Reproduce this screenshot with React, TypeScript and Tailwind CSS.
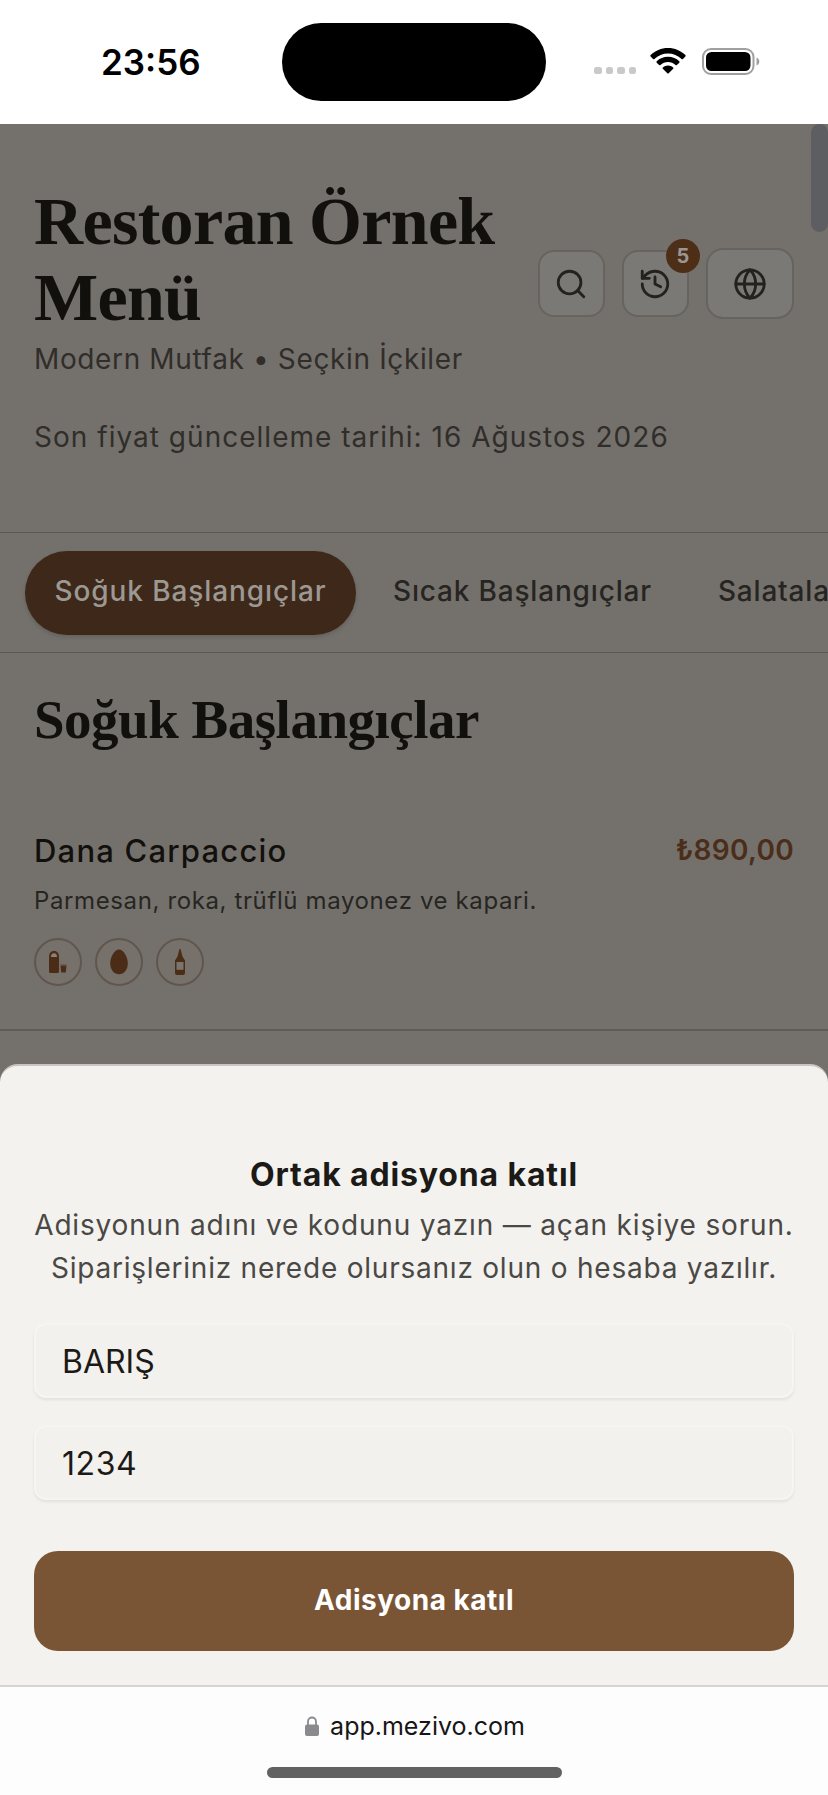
import { Search, History, Globe } from 'lucide-react';

function StatusBar() {
  return (
    <header className="flex h-[124px] shrink-0 items-start bg-white">
      <div className="ml-[101px] mt-[41px] w-[181px] text-[35px] font-semibold leading-[42px] text-black">23:56</div>
      <div className="mt-[23px] h-[78px] w-[264px] rounded-full bg-black" />
      <div className="ml-[48px] mt-[67px] flex gap-[4px]">
        {[0, 1, 2, 3].map((i) => (
          <span key={i} className="h-[7px] w-[7.5px] rounded-[2.5px] bg-[#c9c9c9]" />
        ))}
      </div>
      <svg className="ml-[14px] mt-[48px] h-[26px] w-[36px]" viewBox="0 0 36 26">
        <path d="M18 0C24.800 0 31 2.700 35.400 7.100C35.800 7.500 35.800 8.100 35.400 8.500L33 10.900C32.600 11.300 32 11.300 31.600 10.900C28 7.400 23.200 5.400 18 5.400S8 7.400 4.400 10.900C4 11.300 3.400 11.300 3 10.900L.6 8.500C.2 8.100 .2 7.500 .6 7.100C5 2.700 11.200 0 18 0Z" />
        <path d="M18 8.800C22.400 8.800 26.400 10.500 29.300 13.300C29.700 13.700 29.700 14.300 29.300 14.700L26.900 17C26.500 17.400 25.900 17.400 25.500 17C23.500 15.200 20.900 14.100 18 14.100S12.500 15.200 10.500 17C10.100 17.400 9.500 17.400 9.100 17L6.700 14.700C6.300 14.300 6.300 13.700 6.700 13.300C9.600 10.500 13.600 8.800 18 8.800Z" />
        <path d="M18 17.400C20 17.400 21.900 18.200 23.200 19.400C23.600 19.800 23.600 20.300 23.200 20.700L18.700 25.300C18.300 25.700 17.700 25.700 17.300 25.300L12.800 20.700C12.400 20.300 12.400 19.800 12.800 19.400C14.100 18.200 16 17.400 18 17.400Z" />
      </svg>
      <svg className="ml-[16px] mt-[48px] h-[27px] w-[58px]" viewBox="0 0 58 27">
        <rect x="1" y="1" width="50.500" height="25" rx="8" fill="none" stroke="#a0a0a0" strokeWidth="2" />
        <rect x="4" y="4" width="44.500" height="19" rx="5.500" />
        <path d="M54.500 9.500C56.500 10.200 57.300 11.700 57.300 13.500S56.500 16.800 54.500 17.500Z" fill="#a0a0a0" />
      </svg>
    </header>
  );
}

const iconButton =
  'relative flex items-center justify-center border-2 border-[#67635e] bg-[#7b7975] text-[#24221f]';

function MenuHeader() {
  return (
    <div className="flex h-[408px] flex-col px-[34px] pt-[59px]">
      <div className="flex items-center justify-between">
        <div className="w-[480px] shrink-0">
          <h1 className="whitespace-nowrap font-['Liberation_Serif',serif] text-[68px] font-bold leading-[76px] tracking-[-0.7px] text-[#12100d]">
            Restoran Örnek
            <br />
            Menü
          </h1>
          <p className="mt-[4px] whitespace-nowrap text-[28px] leading-[40px] tracking-[0.63px] text-[#302d2a]">
            Modern Mutfak • Seçkin İçkiler
          </p>
        </div>
        <div className="mt-[5px] flex shrink-0 items-center gap-[17px]">
          <button className={`${iconButton} size-[67px] rounded-[16px] pr-[2px]`}>
            <Search size={34} strokeWidth={2} />
          </button>
          <button className={`${iconButton} size-[67px] rounded-[16px] pr-[2px]`}>
            <History size={34} strokeWidth={2} />
            <span className="absolute -right-[13px] -top-[13px] flex size-[34px] items-center justify-center rounded-full bg-[#4d2f18] text-[20px] font-bold text-[#9a9693]">
              5
            </span>
          </button>
          <button className={`${iconButton} h-[71px] w-[88px] rounded-[17px]`}>
            <Globe size={34} strokeWidth={2} />
          </button>
        </div>
      </div>
      <p className="mt-[38px] whitespace-nowrap text-[28px] leading-[40px] tracking-[1.02px] text-[#302d2a]">
        Son fiyat güncelleme tarihi: 16 Ağustos 2026
      </p>
    </div>
  );
}

function Tabs() {
  return (
    <nav className="flex h-[121px] items-center overflow-hidden whitespace-nowrap border-y border-[#5b5853] pl-[25px] text-[28px] font-medium tracking-[0.82px] text-[#272522]">
      <div className="flex h-[84px] w-[331px] shrink-0 items-center justify-center rounded-full bg-[#3e2819] pb-[3px] tracking-[0.9px] text-[#9c9893] shadow-[0_2px_4px_rgba(0,0,0,0.15)]">
        Soğuk Başlangıçlar
      </div>
      <span className="ml-[37px] pb-[3px]">Sıcak Başlangıçlar</span>
      <span className="ml-[66px] pb-[3px]">Salatalar</span>
    </nav>
  );
}

function BottleAndGlass() {
  return (
    <svg className="size-[26px]" viewBox="0 0 26 26" fill="#4b2c17">
      <path d="M4 9C4 4 5.500 2 9 2S14 4 14 9V22.500Q14 24 12.500 24H5.500Q4 24 4 22.500Z" />
      <path d="M6 8C6 5.500 7 4.200 9 4.200S12 5.500 12 8Z" fill="#8a8378" />
      <path d="M15.500 16.500H21.500L20.800 23.500H16.200Z" />
      <path d="M15.300 15.700H21.700" stroke="#655647" strokeWidth="1" />
    </svg>
  );
}

function Egg() {
  return (
    <svg className="size-[26px]" viewBox="0 0 26 26" fill="#4b2c17">
      <path d="M13 .5C17.500 .5 21.800 8 21.800 14.500C21.800 20.500 18 25.300 13 25.300S4.200 20.500 4.200 14.500C4.200 8 8.500 .5 13 .5Z" />
    </svg>
  );
}

function SauceBottle() {
  return (
    <svg className="size-[26px]" viewBox="0 0 26 26" fill="#4b2c17">
      <path d="M12.500 0H13.500L15.500 7.500L18 11.500V24Q18 26 16 26H10Q8 26 8 24V11.500L10.500 7.500Z" />
      <path d="M9.500 13H16.500V20.800H9.500Z" fill="#7c756d" />
    </svg>
  );
}

function MenuSection() {
  const badge = 'flex size-[48px] items-center justify-center rounded-full border-2 border-[#60564d] bg-[#77716c]';
  return (
    <section>
      <div className="px-[34px] pt-[34px]">
        <h2 className="whitespace-nowrap font-['Liberation_Serif',serif] text-[55px] font-bold leading-[66px] tracking-[-0.5px] text-[#12100d]">
          Soğuk Başlangıçlar
        </h2>
        <div className="mt-[78px] flex items-start justify-between">
          <h3 className="text-[31px] font-medium leading-[40px] tracking-[1.2px] text-[#12100d]">Dana Carpaccio</h3>
          <span className="text-[28px] font-semibold leading-[38px] tracking-[0.3px] text-[#4b2e1a]">₺890,00</span>
        </div>
        <p className="mt-[14px] text-[24px] leading-[32px] tracking-[0.62px] text-[#272522]">
          Parmesan, roka, trüflü mayonez ve kapari.
        </p>
        <div className="mt-[21px] flex gap-[13px]">
          <span className={badge}><BottleAndGlass /></span>
          <span className={badge}><Egg /></span>
          <span className={badge}><SauceBottle /></span>
        </div>
      </div>
      <div className="mt-[43px] h-[2px] bg-[#5f5c57]" />
    </section>
  );
}

function JoinSheet() {
  const field =
    'flex h-[75px] w-full items-center rounded-[12px] border-2 border-[#f7f5f3] bg-[#f3f1ee] px-[26px] pt-[2px] text-[32px] text-[#1c1a17] shadow-[0_2px_3px_rgba(0,0,0,0.07)]';
  return (
    <section className="absolute inset-x-0 bottom-0 flex h-[621px] flex-col rounded-t-[18px] border-t-2 border-[#c9c6c1] bg-[#f3f2ee] px-[34px] text-center">
      <h2 className="mt-[89px] text-[32px] font-bold leading-[40px] tracking-[0.85px] text-[#1c1a17]">
        Ortak adisyona katıl
      </h2>
      <p className="mt-[9px] whitespace-nowrap text-[28px] leading-[42.500px] text-[#4a4845]">
        <span className="tracking-[0.83px]">Adisyonun adını ve kodunu yazın — açan kişiye sorun.</span>
        <br />
        <span className="tracking-[0.78px]">Siparişleriniz nerede olursanız olun o hesaba yazılır.</span>
      </p>
      <div className="mt-[34px] flex flex-col gap-[27px]">
        <div className={field}>BARIŞ</div>
        <div className={`${field} tracking-[0.6px]`}>1234</div>
      </div>
      <button className="mt-[51px] h-[100px] w-full rounded-[24px] bg-[#7a5535] pb-[3px] text-[28px] font-bold tracking-[0.5px] text-white">
        Adisyona katıl
      </button>
    </section>
  );
}

function BrowserBar() {
  return (
    <footer className="flex h-[110px] shrink-0 flex-col items-center border-t-2 border-[#d5d4d2] bg-[#fdfdfd]">
      <div className="mt-[23px] flex items-center gap-[11px] pl-[2px]">
        <svg className="h-[20px] w-[14px]" viewBox="0 0 14 20">
          <path d="M3 9V5.500a4 4 0 0 1 8 0V9" fill="none" stroke="#8a8a8d" strokeWidth="1.800" />
          <rect y="8.500" width="14" height="11.500" rx="2" fill="#8a8a8d" />
        </svg>
        <span className="text-[25px] leading-[32px] text-[#161616]">app.mezivo.com</span>
      </div>
      <div className="mt-[25px] h-[11px] w-[295px] rounded-full bg-[#626262]" />
    </footer>
  );
}

export default function App() {
  return (
    <div className="flex h-[1795px] w-[828px] flex-col overflow-hidden bg-white font-['Inter',sans-serif]">
      <StatusBar />
      <main className="relative h-[1561px] shrink-0 overflow-hidden bg-[#74716c]">
        <MenuHeader />
        <Tabs />
        <MenuSection />
        <div className="absolute right-0 top-0 h-[108px] w-[17px] rounded-full bg-[#5c5e61]" />
        <JoinSheet />
      </main>
      <BrowserBar />
    </div>
  );
}
